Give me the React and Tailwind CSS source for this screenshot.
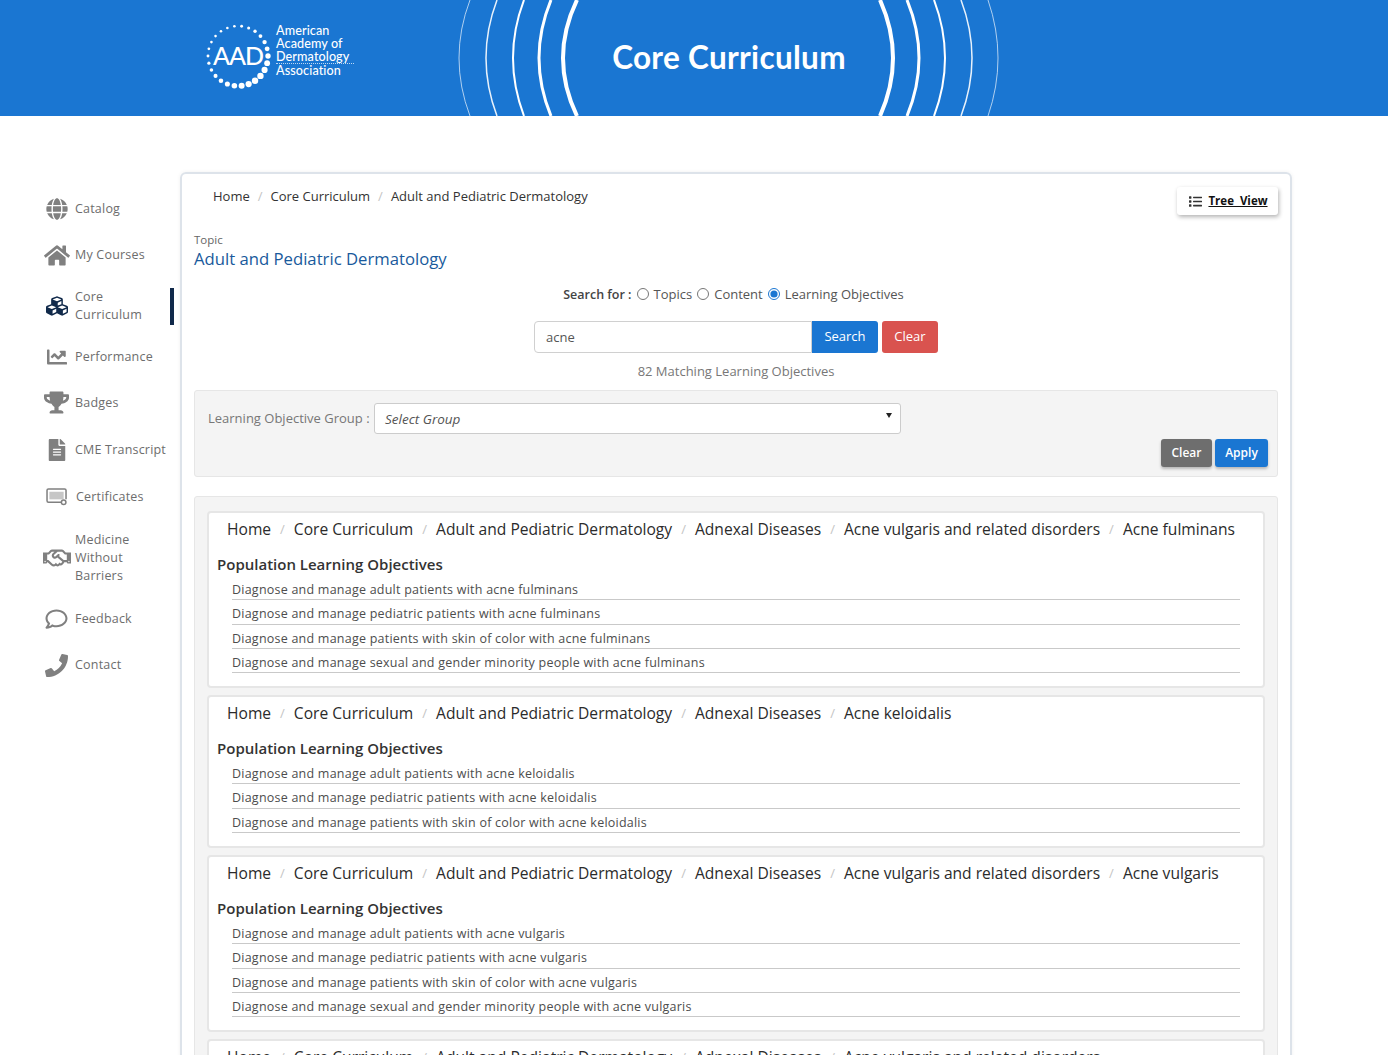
import React from 'react';
import { FaGlobe, FaHome, FaCubes, FaChartLine, FaTrophy, FaFileAlt, FaRegHandshake, FaRegComment, FaPhoneAlt, FaList } from 'react-icons/fa';

const CertIcon = ({ className }) => (
  <svg className={className} viewBox="0 0 24 20" fill="none" stroke="currentColor">
    <path d="M17 16H3a1.5 1.5 0 0 1-1.5-1.5v-11A1.5 1.5 0 0 1 3 2h17a1.5 1.5 0 0 1 1.5 1.5V13" strokeWidth="1.6" />
    <path d="M4 5h15v8H4z" fill="currentColor" stroke="none" opacity="0.45" />
    <circle cx="19" cy="16" r="2.4" strokeWidth="1.6" />
  </svg>
);

const navItems = [
  { label: 'Catalog', icon: FaGlobe, h: 'h-[46px]', size: 'w-[22px] h-[22px]' },
  { label: 'My Courses', icon: FaHome, h: 'h-[46px]', size: 'w-[26px] h-[23px]' },
  { label: 'Core Curriculum', icon: FaCubes, h: 'h-[56px]', size: 'w-[24px] h-[22px]', active: true, textW: 'w-[76px]' },
  { label: 'Performance', icon: FaChartLine, h: 'h-[45px]', size: 'w-[24px] h-[20px]' },
  { label: 'Badges', icon: FaTrophy, h: 'h-[47px]', size: 'w-[25px] h-[23px]' },
  { label: 'CME Transcript', icon: FaFileAlt, h: 'h-[47px]', size: 'w-[18px] h-[22px]' },
  { label: 'Certificates', icon: CertIcon, h: 'h-[47px]', size: 'w-[24px] h-[19px]', textW: 'ml-[1px]' },
  { label: 'Medicine Without Barriers', icon: FaRegHandshake, h: 'h-[76px]', size: 'w-[28px] h-[24px]', textW: 'w-[76px]' },
  { label: 'Feedback', icon: FaRegComment, h: 'h-[46px]', size: 'w-[25px] h-[22px]' },
  { label: 'Contact', icon: FaPhoneAlt, h: 'h-[46px]', size: 'w-[23px] h-[23px] -scale-x-100' },
];

const results = [
  {
    crumbs: ['Home', 'Core Curriculum', 'Adult and Pediatric Dermatology', 'Adnexal Diseases', 'Acne vulgaris and related disorders', 'Acne fulminans'],
    rows: [
      'Diagnose and manage adult patients with acne fulminans',
      'Diagnose and manage pediatric patients with acne fulminans',
      'Diagnose and manage patients with skin of color with acne fulminans',
      'Diagnose and manage sexual and gender minority people with acne fulminans',
    ],
  },
  {
    crumbs: ['Home', 'Core Curriculum', 'Adult and Pediatric Dermatology', 'Adnexal Diseases', 'Acne keloidalis'],
    rows: [
      'Diagnose and manage adult patients with acne keloidalis',
      'Diagnose and manage pediatric patients with acne keloidalis',
      'Diagnose and manage patients with skin of color with acne keloidalis',
    ],
  },
  {
    crumbs: ['Home', 'Core Curriculum', 'Adult and Pediatric Dermatology', 'Adnexal Diseases', 'Acne vulgaris and related disorders', 'Acne vulgaris'],
    rows: [
      'Diagnose and manage adult patients with acne vulgaris',
      'Diagnose and manage pediatric patients with acne vulgaris',
      'Diagnose and manage patients with skin of color with acne vulgaris',
      'Diagnose and manage sexual and gender minority people with acne vulgaris',
    ],
  },
  {
    crumbs: ['Home', 'Core Curriculum', 'Adult and Pediatric Dermatology', 'Adnexal Diseases', 'Acne vulgaris and related disorders'],
    rows: [],
  },
];

// arcs as [x at the header edge, x at mid height, stroke width, opacity]
const arcs = [
  [12, 1, 1, 0.65], [39, 28, 1.5, 0.9], [66, 55, 2, 1], [93, 81, 3, 1], [119, 105, 4, 1],
  [422, 435, 4, 1], [449, 461, 3, 1], [476, 487, 2, 1], [503, 514, 1.5, 0.9], [530, 540, 1, 0.65],
];

const LogoDots = () => {
  const dots = [];
  for (let i = 0; i < 26; i++) {
    const a = (i / 26) * Math.PI * 2;
    // biggest dots sit at the lower right of the ring
    const r = 1.3 + 1.9 * Math.pow((1 + Math.cos(a - 0.9)) / 2, 1.5);
    dots.push(<circle key={i} cx={34 + 30 * Math.cos(a)} cy={34 + 30 * Math.sin(a)} r={r} fill="white" />);
  }
  return (
    <svg className="w-[68px] h-[68px]" viewBox="0 0 68 68">
      {dots}
    </svg>
  );
};

const Crumbs = ({ items, className, gap }) => (
  <div className={`flex items-center whitespace-nowrap font-medium ${className}`}>
    {items.map((c, i) => (
      <React.Fragment key={c}>
        {i > 0 && <span className={`text-[#c4c4c4] font-normal text-[13px] ${gap}`}>/</span>}
        <span>{c}</span>
      </React.Fragment>
    ))}
  </div>
);

const ResultCard = ({ crumbs, rows }) => (
  <div className="bg-white border-2 border-[#e6e6e6] rounded-[4px] pt-1 pb-[13px]">
    <Crumbs items={crumbs} className="pl-[18px] text-[15.6px] leading-6 text-[#2b2b2b]" gap="px-[9px]" />
    <div className="mt-[11px] pl-[8px] text-[15px] leading-6 font-semibold text-[#333]">Population Learning Objectives</div>
    <div className="mx-[23px]">
      {rows.map((r) => (
        <div key={r} className="h-[24.3px] border-b border-[#c9c9c9] text-[12.5px] leading-[28px] text-[#4d4d4d] tracking-[0.23px]">{r}</div>
      ))}
    </div>
  </div>
);

export default function App() {
  return (
    <div className="h-[1055px] overflow-hidden bg-white font-['Open_Sans',sans-serif]">
      {/* Banner */}
      <header className="h-[116px] bg-[#1a76d2] flex pl-[205px]">
        <div className="flex items-center w-[253px] text-white">
          <div className="relative w-[68px] h-[68px] shrink-0 -ml-[1px] -mt-[4px]">
            <LogoDots />
            <span className="absolute inset-0 flex items-center justify-center font-['Lato',sans-serif] text-[25px] font-medium tracking-[-1px]">AAD</span>
          </div>
          <div className="ml-[4px] -mt-[16px] font-['Lato',sans-serif] text-[12.6px] font-medium leading-[13px] tracking-[0.1px]">
            <div>American</div>
            <div>Academy of</div>
            <div className="border-b border-dotted border-white/70 w-[78px]">Dermatology</div>
            <div>Association</div>
          </div>
        </div>
        <div className="relative w-[542px] h-[116px] flex items-center justify-center">
          <svg className="absolute inset-0 w-[542px] h-[116px]" viewBox="0 0 542 116" fill="none">
            {arcs.map(([edge, mid, w, o]) => (
              <path key={edge} d={`M${edge} 0Q${2 * mid - edge} 58 ${edge} 116`} stroke="white" strokeWidth={w} opacity={o} />
            ))}
          </svg>
          <h1 className="-mt-[1px] font-['Lato',sans-serif] text-[31.5px] font-bold text-white tracking-[0.3px]">Core Curriculum</h1>
        </div>
      </header>

      <div className="flex pt-[56px]">
        {/* Sidebar */}
        <nav className="w-[174px] shrink-0 mr-[6px] pt-[14px]">
          {navItems.map(({ label, icon: Icon, h, size, active, textW }) => (
            <div key={label} className={`${h} flex items-center`}>
              <div className="w-[75px] pl-[42px] pr-[4px] flex justify-center shrink-0">
                <Icon className={`${size} shrink-0 ${active ? 'text-[#10294a]' : 'text-[#808080]'}`} />
              </div>
              <span className={`text-[12.5px] leading-[18px] text-[#6d6d6d] tracking-[0.2px] ${textW || ''}`}>{label}</span>
              {active && <div className="ml-auto w-[4px] h-[37px] bg-[#10294a]" />}
            </div>
          ))}
        </nav>

        {/* Main card */}
        <main className="w-[1112px] border-2 border-[#dde3ea] rounded-t-[6px] pt-[13px] pl-3 pr-[12px] shadow-[0_0_4px_rgba(0,0,0,0.06)]">
          <div className="flex justify-between items-start">
            <Crumbs items={['Home', 'Core Curriculum', 'Adult and Pediatric Dermatology']} className="ml-[19px] text-[13px] leading-[19px] text-[#333]" gap="px-[8px]" />
            <button className="h-[28px] w-[101px] pl-[2px] flex items-center justify-center gap-[6px] bg-white rounded-[3px] shadow-[1px_2px_4px_rgba(0,0,0,0.3)] text-[#111] text-[11.5px] font-bold">
              <FaList className="w-[13px] h-[13px] text-[#333]" />
              <span className="underline">Tree&nbsp;&nbsp;View</span>
            </button>
          </div>

          <div className="mt-[17px] text-[11.5px] leading-4 text-[#666]">Topic</div>
          <h2 className="-mt-[1px] text-[16.7px] leading-6 text-[#195a9c] font-medium">Adult and Pediatric Dermatology</h2>

          <div className="mt-[14px] h-[20px] pr-[5px] flex items-center justify-center gap-[5px] text-[13px] text-[#555]">
            <span className="font-semibold text-[12.5px] text-[#444]">Search for :</span>
            <input type="radio" name="searchFor" className="w-[12px] h-[12px] -mt-[3px]" />
            <span>Topics</span>
            <input type="radio" name="searchFor" className="w-[12px] h-[12px] -mt-[3px]" />
            <span>Content</span>
            <input type="radio" name="searchFor" defaultChecked className="w-[12px] h-[12px] -mt-[3px] accent-[#1a76d2]" />
            <span>Learning Objectives</span>
          </div>

          <div className="mt-[16px] flex justify-center">
            <input defaultValue="acne" className="w-[278px] h-[32px] px-[11px] border border-[#d0d0d0] rounded-l-[4px] text-[13px] text-[#555] outline-none" />
            <button className="w-[66px] h-[32px] bg-[#1a76d2] text-white text-[13px] rounded-r-[3px]">Search</button>
            <button className="ml-[4px] w-[56px] h-[32px] bg-[#d9534f] text-white text-[13px] rounded-[3px]">Clear</button>
          </div>

          <div className="mt-[8px] h-[20px] text-center text-[13px] leading-5 text-[#777]">82 Matching Learning Objectives</div>

          {/* Filter panel */}
          <div className="mt-[9px] h-[87px] bg-[#f4f4f4] border border-[#e6e6e6] rounded-[3px] pt-3 pl-[13px] pr-[9px]">
            <div className="flex items-center">
              <span className="w-[166px] text-[13px] text-[#777]">Learning Objective Group :</span>
              <div className="w-[527px] h-[31px] bg-white border border-[#ccc] rounded-[3px] pl-[10px] pr-[8px] flex items-center justify-between">
                <span className="mt-[1px] text-[13.5px] italic text-[#555]">Select Group</span>
                <span className="w-0 h-0 -mt-[6px] border-x-[3.5px] border-x-transparent border-t-[5px] border-t-[#222]" />
              </div>
            </div>
            <div className="mt-[5px] flex justify-end gap-[3px]">
              <button className="w-[51px] h-[28px] bg-[#6e6e6e] text-white text-[12px] font-semibold rounded-[3px] shadow-[0_2px_3px_rgba(0,0,0,0.25)]">Clear</button>
              <button className="w-[53px] h-[28px] bg-[#1a76d2] text-white text-[12px] font-semibold rounded-[3px] shadow-[0_2px_3px_rgba(0,0,0,0.25)]">Apply</button>
            </div>
          </div>

          {/* Results */}
          <div className="mt-[19px] bg-[#f4f4f4] border border-[#e6e6e6] rounded-[3px] pt-[14px] px-[12px] flex flex-col gap-[7px]">
            {results.map((r, i) => (
              <ResultCard key={i} crumbs={r.crumbs} rows={r.rows} />
            ))}
          </div>
        </main>
      </div>
    </div>
  );
}
